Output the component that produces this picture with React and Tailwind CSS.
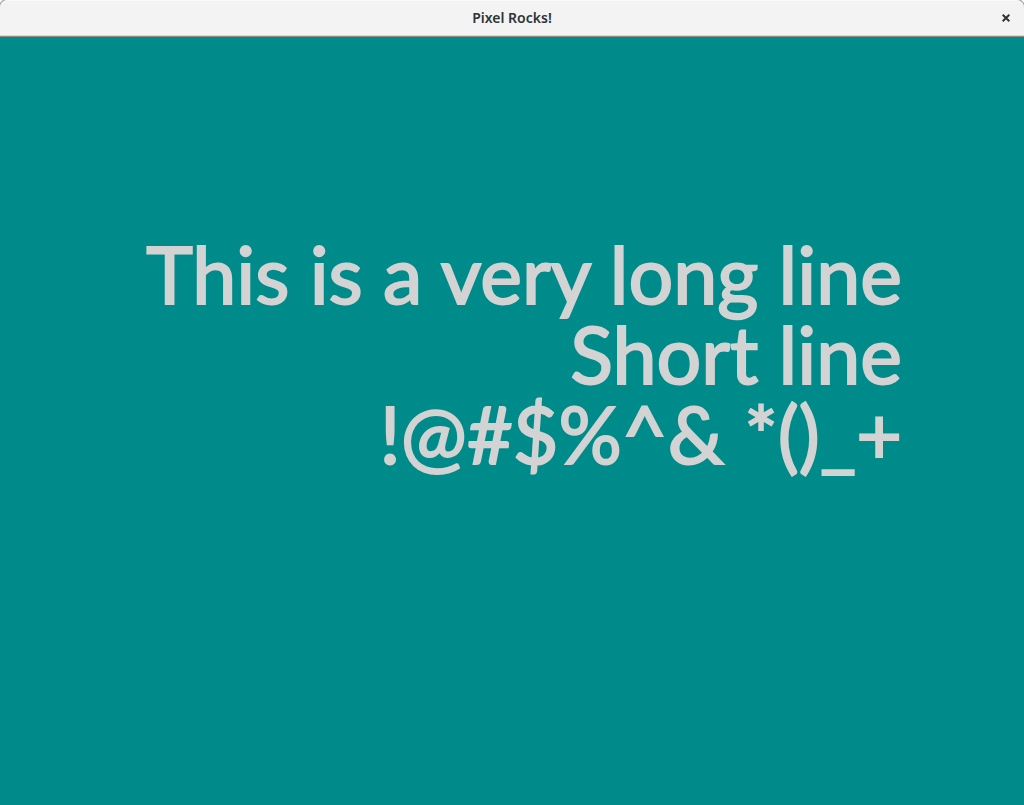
export default function App() {
  return (
    <div className="flex min-h-screen flex-col bg-[#008b8b]">
      <div className="bg-white">
        <header className="grid h-[37px] grid-cols-[1fr_auto_1fr] items-center rounded-t-lg border-b border-b-[#8f8f88] bg-[#f3f3f3] px-2 shadow-[-1px_-1px_0_#a8a8a8,1px_-1px_0_#a8a8a8,inset_0_1px_0_#fafafa,inset_0_-1px_0_#d8d8d3]">
          <h1 className="col-start-2 font-['Noto_Sans','Open_Sans',sans-serif] text-sm font-semibold text-[#2e3436]">Pixel Rocks!</h1>
          <button type="button" aria-label="Close" className="flex size-5 items-center justify-center justify-self-end text-[#2e3436]">
            <svg viewBox="0 0 8 8" className="size-2" fill="none" stroke="currentColor" strokeWidth="2"><path d="M.7.7l6.6 6.6M7.3.7L.7 7.3" /></svg>
          </button>
        </header>
      </div>
      <main className="flex-1 pt-[197px] pr-[122px]">
        <p className="text-right font-['Lato',sans-serif] text-[79px] leading-[80px] font-normal whitespace-nowrap text-[#d3d3d3] [-webkit-text-stroke:2px_#d3d3d3] [stroke-linejoin:round] [paint-order:stroke_fill]">
          This is a very long line
          <br />
          Short line
          <br />
          {'!@#$%^& *()_+'}
        </p>
      </main>
    </div>
  );
}
